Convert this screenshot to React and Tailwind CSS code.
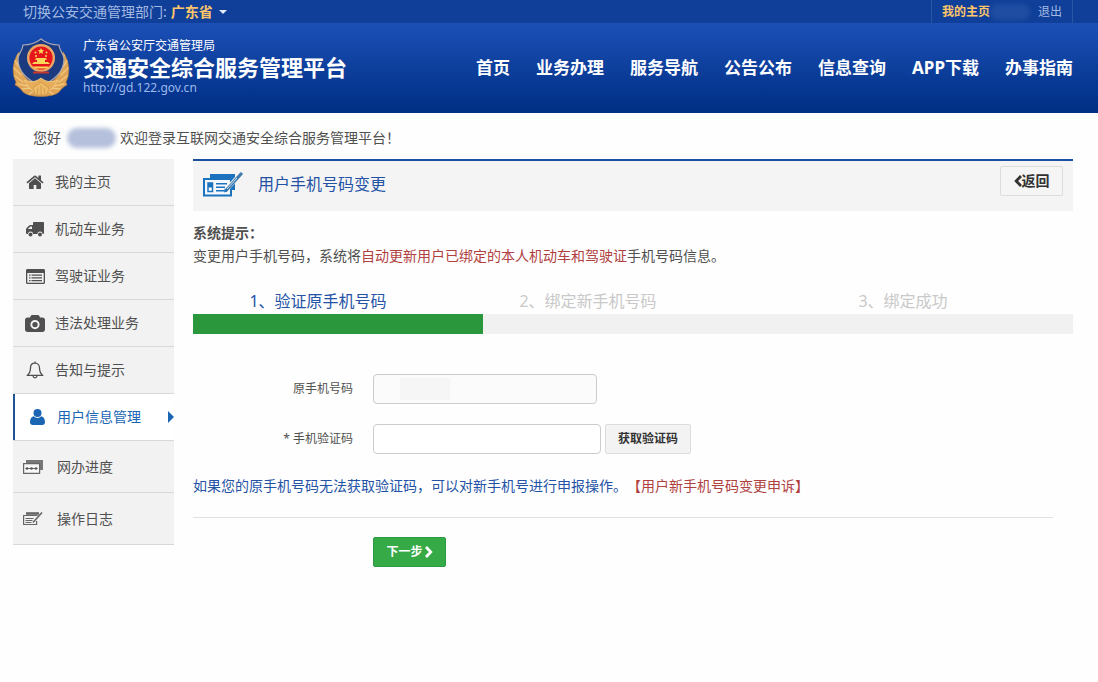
/*
------------------------------------------------
File: App.jsx
Purpose: Change bound phone number page of the traffic service platform.
Responsibilities: Top bar, site header, side menu and the verification form.
Dependencies: react
------------------------------------------------
*/

import React from 'react';

const NAV = ['首页', '业务办理', '服务导航', '公告公布', '信息查询', 'APP下载', '办事指南'];

const Emblem = () => (
  <svg viewBox="0 0 58 60" className="h-[60px] w-[58px] shrink-0" aria-hidden="true">
    {/* wheat on both sides */}
    <path d="M7 14C1 22-1 35 4 44l-1 3c4 2 6 4 8 7 6 6 30 6 36 0 2-3 4-5 8-7l-1-3c5-9 3-22-3-30l-3 6c2 9 0 16-5 21-6 5-22 5-28 0-5-5-7-12-5-21z" fill="#dfa455" stroke="#b5793a" strokeWidth="0.6" />
    <g fill="none" stroke="#f0c67c" strokeWidth="1.4" strokeLinecap="round">
      <path d="M6 17l2 6M3 23l5 7M2 30l7 7M3 38l8 6M6 46l10 2M10 51l9-1M17 56l6-4" />
      <path d="M52 17l-2 6M55 23l-5 7M56 30l-7 7M55 38l-8 6M52 46l-10 2M48 51l-9-1M41 56l-6-4" />
    </g>
    <path d="M29 1c5 4 12 6 18 6 0 5 5 9 5 14 0 12-9 21-23 27C15 42 6 33 6 21c0-5 5-9 5-14 6 0 13-2 18-6z" fill="#1c3a80" stroke="#a9a9b4" strokeWidth="1.2" />
    <circle cx="29" cy="20" r="14" fill="#eba765" />
    <circle cx="29" cy="20" r="11.6" fill="#e5161b" />
    <g fill="#fbd558">
      <path d="M29 10l1 2 2.200.2-1.700 1.500.6 2.200-2.100-1.200-2.100 1.200.6-2.200-1.700-1.500 2.200-.2z" />
      <circle cx="23.500" cy="14.500" r="1" />
      <circle cx="34.500" cy="14.500" r="1" />
      <circle cx="24" cy="18" r="1" />
      <circle cx="34" cy="18" r="1" />
      <path d="M24 20h10l1 1.800h-2V24h3l2 2H20l2-2h3v-2.200h-2z" />
      <path d="M21 28.500h16l-2 2H23z" />
    </g>
    <path d="M21 34.500h16" stroke="#c9372c" strokeWidth="2" />
    <path d="M12 42c6 3 12 2 17-2 5 4 11 5 17 2l-6 9c-4 1-7 0-11-2-4 2-7 3-11 2z" fill="#e6ac59" stroke="#f4cf86" strokeWidth="0.8" />
    <path d="M21 50l8-6 8 6-2 7H23z" fill="#edba66" stroke="#c98b40" strokeWidth="0.6" />
    <path d="M26 50l-1 7M32 50l1 7M29 48v9" stroke="#c98b40" strokeWidth="0.6" />
  </svg>
);

const ChevronLeft = () => (
  <svg viewBox="0 0 8 12" className="h-3 w-2" fill="none" stroke="currentColor" strokeWidth="2.800">
    <path d="M7 1L2.200 6 7 11" />
  </svg>
);

const ChevronRight = () => (
  <svg viewBox="0 0 8 12" className="h-3 w-2" fill="none" stroke="currentColor" strokeWidth="2.800">
    <path d="M1 1l4.800 5L1 11" />
  </svg>
);

const HomeIcon = () => (
  <svg viewBox="90 200 1612 1340" className="h-[14px] w-[18px]" fill="currentColor">
    <path d="M1472 992v480q0 26-19 45t-45 19h-384v-384h-256v384h-384q-26 0-45-19t-19-45v-480q0-1 .5-3t.5-3l575-474 575 474q1 2 1 6zm223-69l-62 74q-8 9-21 11h-3q-13 0-21-7l-692-577-692 577q-12 8-24 7-13-2-21-11l-62-74q-8-10-7-23.500t11-21.500l719-599q32-26 76-26t76 26l244 204v-195q0-14 9-23t23-9h192q14 0 23 9t9 23v408l219 182q10 8 11 21.500t-7 23.500z" />
  </svg>
);

const TruckIcon = () => (
  <svg viewBox="0 0 18 15" className="h-[15px] w-[18px]" fill="currentColor">
    <path fillRule="evenodd" d="M7 1c0-.6.4-1 1-1h9c.6 0 1 .4 1 1v10c0 .8-.5 1-1.500 1a2.500 2.500 0 0 0-5 0H7a2.500 2.500 0 0 0-5 0C.6 12 0 11.800 0 11V7.500c0-.6.2-1 .6-1.400l2.300-2.400c.4-.4.8-.7 1.400-.7H7zM2 7h4V4.400H4.500L2 6.800z" />
    <circle cx="4.500" cy="12.500" r="2" />
    <circle cx="14" cy="12.500" r="2" />
  </svg>
);

const ListIcon = () => (
  <svg viewBox="0 0 19 15" className="h-[15px] w-[19px]" fill="currentColor">
    <path fillRule="evenodd" d="M1.500 0h16c.9 0 1.500.6 1.500 1.500v12c0 .9-.6 1.500-1.500 1.500h-16C.6 15 0 14.400 0 13.500v-12C0 .6.6 0 1.500 0zM1.300 4v9.300c0 .2.200.4.4.4h15.600c.2 0 .4-.2.4-.4V4z" />
    <path d="M3 5.500h1.500v1.200H3zM3 8.200h1.500v1.200H3zM3 11h1.500v1.200H3zM5.500 5.500H16v1.200H5.500zM5.500 8.200H16v1.200H5.500zM5.500 11H16v1.200H5.500z" />
  </svg>
);

const CameraIcon = () => (
  <svg viewBox="0 0 20 17" className="h-[17px] w-5" fill="currentColor">
    <path fillRule="evenodd" d="M2.500 2.500H5l.8-1.700C6 .3 6.600 0 7.200 0h5.600c.6 0 1.200.3 1.400.8l.8 1.700h2.500c1.400 0 2.500 1 2.500 2.300v9.800c0 1.300-1.100 2.400-2.500 2.400h-15C1.100 17 0 15.900 0 14.600V4.800c0-1.300 1.100-2.300 2.500-2.300zM10 5a4.600 4.600 0 1 0 0 9.200A4.600 4.600 0 0 0 10 5zm0 1.900a2.700 2.700 0 1 1 0 5.400 2.700 2.700 0 0 1 0-5.400z" />
  </svg>
);

const BellIcon = () => (
  <svg viewBox="0 0 18 18" className="h-[18px] w-[18px]" fill="none" stroke="currentColor" strokeWidth="1.300" strokeLinejoin="round">
    <path d="M9 2.200c-3 0-4.500 2.200-4.500 4.800 0 3.600-1 5.600-3.300 7.400h15.600c-2.300-1.800-3.300-3.800-3.300-7.400 0-2.600-1.500-4.800-4.500-4.800zM9 .5v1.700" />
    <path d="M7 15c.2 1.200 1 1.900 2 1.900s1.800-.7 2-1.900" />
  </svg>
);

const UserIcon = () => (
  <svg viewBox="0 0 15 16" className="h-4 w-[15px]" fill="currentColor">
    <circle cx="7.500" cy="4" r="4" />
    <path d="M3.700 7.200C1.200 7.600 0 10 0 13.200 0 15 1.200 16 2.800 16h9.400c1.600 0 2.800-1 2.800-2.800 0-3.200-1.200-5.600-3.700-6A5.300 5.300 0 0 1 7.500 9a5.300 5.300 0 0 1-3.800-1.800z" />
  </svg>
);

const ProgressIcon = () => (
  <svg viewBox="0 0 20 14" className="h-[14px] w-5">
    <path d="M3 0h17v10h-3V3H3z" fill="#777" />
    <path d="M.6 3.600h16v9.800H.6z" fill="#f8f8f8" stroke="#666" strokeWidth="1.200" />
    <path d="M2.500 8.500h12" stroke="#666" />
    <g fill="#555">
      <circle cx="4" cy="8.500" r="1.300" />
      <circle cx="8.500" cy="8.500" r="1.300" />
      <circle cx="13" cy="8.500" r="1.300" />
    </g>
  </svg>
);

const LogIcon = () => (
  <svg viewBox="0 0 20 13" className="h-[13px] w-5" fill="none" stroke="#666">
    <path d="M3 1.500h13" strokeWidth="2.600" />
    <path d="M14.500 3.500H.6v9h13V9" strokeWidth="1.200" />
    <path d="M2.500 6.500h8M2.500 8.500h7M2.500 10.500h6" />
    <path d="M19 .5l-9 10" strokeWidth="1.600" />
  </svg>
);

const TitleIcon = () => (
  <svg viewBox="0 0 40 25" className="h-[25px] w-10 shrink-0">
    <path d="M7 2h25v16h-4V6H7z" fill="#1b72bd" />
    <path d="M1 7h27v16.500H1z" fill="#f4f8fc" stroke="#1b72bd" strokeWidth="2" />
    <path d="M7 2h25v6H7z" fill="#1b72bd" />
    <path d="M5 11h4.500v8.500H5z" fill="#fff" stroke="#1b72bd" strokeWidth="1.500" />
    <path d="M5 11h4.500v4.500H5zM13 11h11v1.500H13zM13 14.500h9V16h-9zM13 18h10v1.500H13z" fill="#1b72bd" />
    <path d="M28 8h4l-4 9z" fill="#1b72bd" />
    <path d="M36 4L22 19" stroke="#f4f4f4" strokeWidth="4.500" />
    <path d="M38 2L23.500 18" stroke="#3d7aae" strokeWidth="3.200" strokeLinecap="round" />
    <path d="M34 6L24 17" stroke="#cfe3f3" strokeWidth="1" />
    <path d="M21 20.500l.7-4 3 2.600z" fill="#1b72bd" />
  </svg>
);

const MENU = [
  { label: '我的主页', Icon: HomeIcon },
  { label: '机动车业务', Icon: TruckIcon },
  { label: '驾驶证业务', Icon: ListIcon },
  { label: '违法处理业务', Icon: CameraIcon },
  { label: '告知与提示', Icon: BellIcon },
  { label: '用户信息管理', Icon: UserIcon, active: true },
  { label: '网办进度', Icon: ProgressIcon, tall: true },
  { label: '操作日志', Icon: LogIcon, tall: true },
];

const TopBar = () => (
  <div className="flex h-[23px] items-center justify-between bg-[#0f3f98] pr-[25px] pl-[23px] text-sm leading-5 text-[#a3b9e2]">
    <div className="flex items-center">
      <span>切换公安交通管理部门:</span>
      <button type="button" className="ml-1 flex items-center gap-1.5 font-bold text-[#ffc66b]">
        广东省
        <svg viewBox="0 0 8 4" className="h-1 w-2" fill="#e4ecfa">
          <path d="M0 0h8L4 4z" />
        </svg>
      </button>
    </div>
    <div className="flex h-full items-center border-x border-[#2a56a8] px-2.5 text-xs">
      <a href="#home" className="font-bold text-[#ffc66b]">我的主页</a>
      <span className="mr-2 h-4 w-10 rounded-full bg-[#1f4da2] blur-[2px]" />
      <a href="#logout">退出</a>
    </div>
  </div>
);

const Header = () => (
  <header className="flex h-[90px] items-center justify-between bg-linear-to-b from-[#1c50b6] to-[#002e84] pr-[25px] pl-3">
    <div className="flex items-start gap-[13px]">
      <Emblem />
      <div className="text-white">
        <p className="text-xs leading-4">广东省公安厅交通管理局</p>
        <h1 className="text-[22px] leading-[26px] font-bold">交通安全综合服务管理平台</h1>
        <p className="text-xs leading-4 text-[#9db9ec]">http://gd.122.gov.cn</p>
      </div>
    </div>
    <nav className="flex gap-[26px] text-[17px] font-bold text-white">
      {NAV.map((item) => (
        <a key={item} href="#nav">{item}</a>
      ))}
    </nav>
  </header>
);

const MenuItem = ({ label, Icon, active, tall }) => {
  if (active) {
    return (
      <li className="border-b border-[#d8d8d8]">
        <a href="#menu" className="flex h-[46px] items-center gap-2.5 border-l-2 border-[#1d5593] bg-white pl-3 text-[#1a66b3]">
          <span className="flex w-5 justify-center"><Icon /></span>
          {label}
          <svg viewBox="0 0 6 12" className="ml-auto h-3 w-1.5" fill="currentColor">
            <path d="M0 0l6 6-6 6z" />
          </svg>
        </a>
      </li>
    );
  }

  return (
    <li className="border-b border-[#d8d8d8] bg-[#f2f2f2]">
      <a href="#menu" className={tall ? 'flex h-[51px] items-center gap-3.5 pl-2.5' : 'flex h-[46px] items-center gap-2.5 pl-3'}>
        <span className="flex w-5 justify-center"><Icon /></span>
        {label}
      </a>
    </li>
  );
};

const Sidebar = () => (
  <aside className="w-[161px] shrink-0">
    <ul className="text-sm text-[#505050]">
      {MENU.map((item) => (
        <MenuItem key={item.label} {...item} />
      ))}
    </ul>
  </aside>
);

const Steps = () => (
  <div>
    <ol className="grid grid-cols-[25fr_29fr_34fr] pb-px text-center text-base leading-6 text-[#c9c9c9]">
      <li className="text-[#2453a6]">1、验证原手机号码</li>
      <li>2、绑定新手机号码</li>
      <li>3、绑定成功</li>
    </ol>
    <div className="h-5 bg-[#f1f1f1]">
      <div className="h-full w-[33%] bg-[#2b973c]" />
    </div>
  </div>
);

const App = () => (
  <div className="min-h-screen bg-[#fefefe] font-['Noto_Sans','Noto_Sans_CJK_SC',sans-serif] text-sm text-[#505050] [text-spacing-trim:space-all]">
    <TopBar />
    <Header />

    <p className="flex h-[46px] items-center pt-1 pl-[33px]">
      您好
      <span className="mr-1 ml-1.5 h-5 w-[49px] rounded-full bg-[#b5c0dc] blur-[2px]" />
      欢迎登录互联网交通安全综合服务管理平台！
    </p>

    <div className="flex items-start gap-[19px] pr-[25px] pl-[13px]">
      <Sidebar />

      <main className="min-w-0 flex-1">
        <div className="flex h-[52px] items-start justify-between border-t-2 border-[#1c4fa0] bg-[#f4f4f4] px-2.5 pt-[5px]">
          <h2 className="flex h-9 items-center gap-[15px] text-base text-[#2453a6]">
            <TitleIcon />
            用户手机号码变更
          </h2>
          <button type="button" className="flex h-[30px] w-[63px] items-center justify-center rounded-xs border border-[#dcdcdc] bg-[#f5f5f5] font-bold text-[#333]">
            <ChevronLeft />
            返回
          </button>
        </div>

        <section className="mt-2.5 mb-[22px] leading-[23px]">
          <h3 className="font-bold">系统提示：</h3>
          <p>
            变更用户手机号码，系统将<span className="text-[#b0413e]">自动更新用户已绑定的本人机动车和驾驶证</span>手机号码信息。
          </p>
        </section>

        <Steps />

        <form className="mt-10">
          <div className="flex items-center">
            <label htmlFor="old-phone" className="mr-5 w-40 text-right text-xs">原手机号码</label>
            <div className="relative">
              <input id="old-phone" type="text" readOnly className="block h-[30px] w-56 rounded-sm border border-[#ccc] bg-[#fbfbfb] px-2" />
              <span className="absolute top-1 left-[27px] h-[22px] w-[50px] bg-[#f6f6f6]" />
            </div>
          </div>
          <div className="mt-5 flex items-center">
            <label htmlFor="sms-code" className="mr-5 w-40 text-right text-xs">* 手机验证码</label>
            <input id="sms-code" type="text" className="h-[30px] w-[228px] rounded-sm border border-[#ccc] bg-white px-2" />
            <button type="button" className="ml-1 h-[30px] w-[86px] rounded-xs border border-[#dcdcdc] bg-[#f3f3f3] text-xs font-bold text-[#333]">
              获取验证码
            </button>
          </div>

          <p className="mt-5 leading-6 text-[#2453a6]">
            如果您的原手机号码无法获取验证码，可以对新手机号进行申报操作。<a href="#appeal" className="text-[#b0413e]">【用户新手机号码变更申诉】</a>
          </p>

          <hr className="mt-[19px] mr-5 mb-[19px] border-[#e2e2e2]" />

          <button type="submit" className="ml-[180px] flex h-[30px] w-[73px] items-center justify-center gap-0.5 rounded-xs border border-[#2c9a42] bg-[#35aa47] text-xs font-bold text-white">
            下一步
            <ChevronRight />
          </button>
        </form>
      </main>
    </div>
  </div>
);

export default App;
